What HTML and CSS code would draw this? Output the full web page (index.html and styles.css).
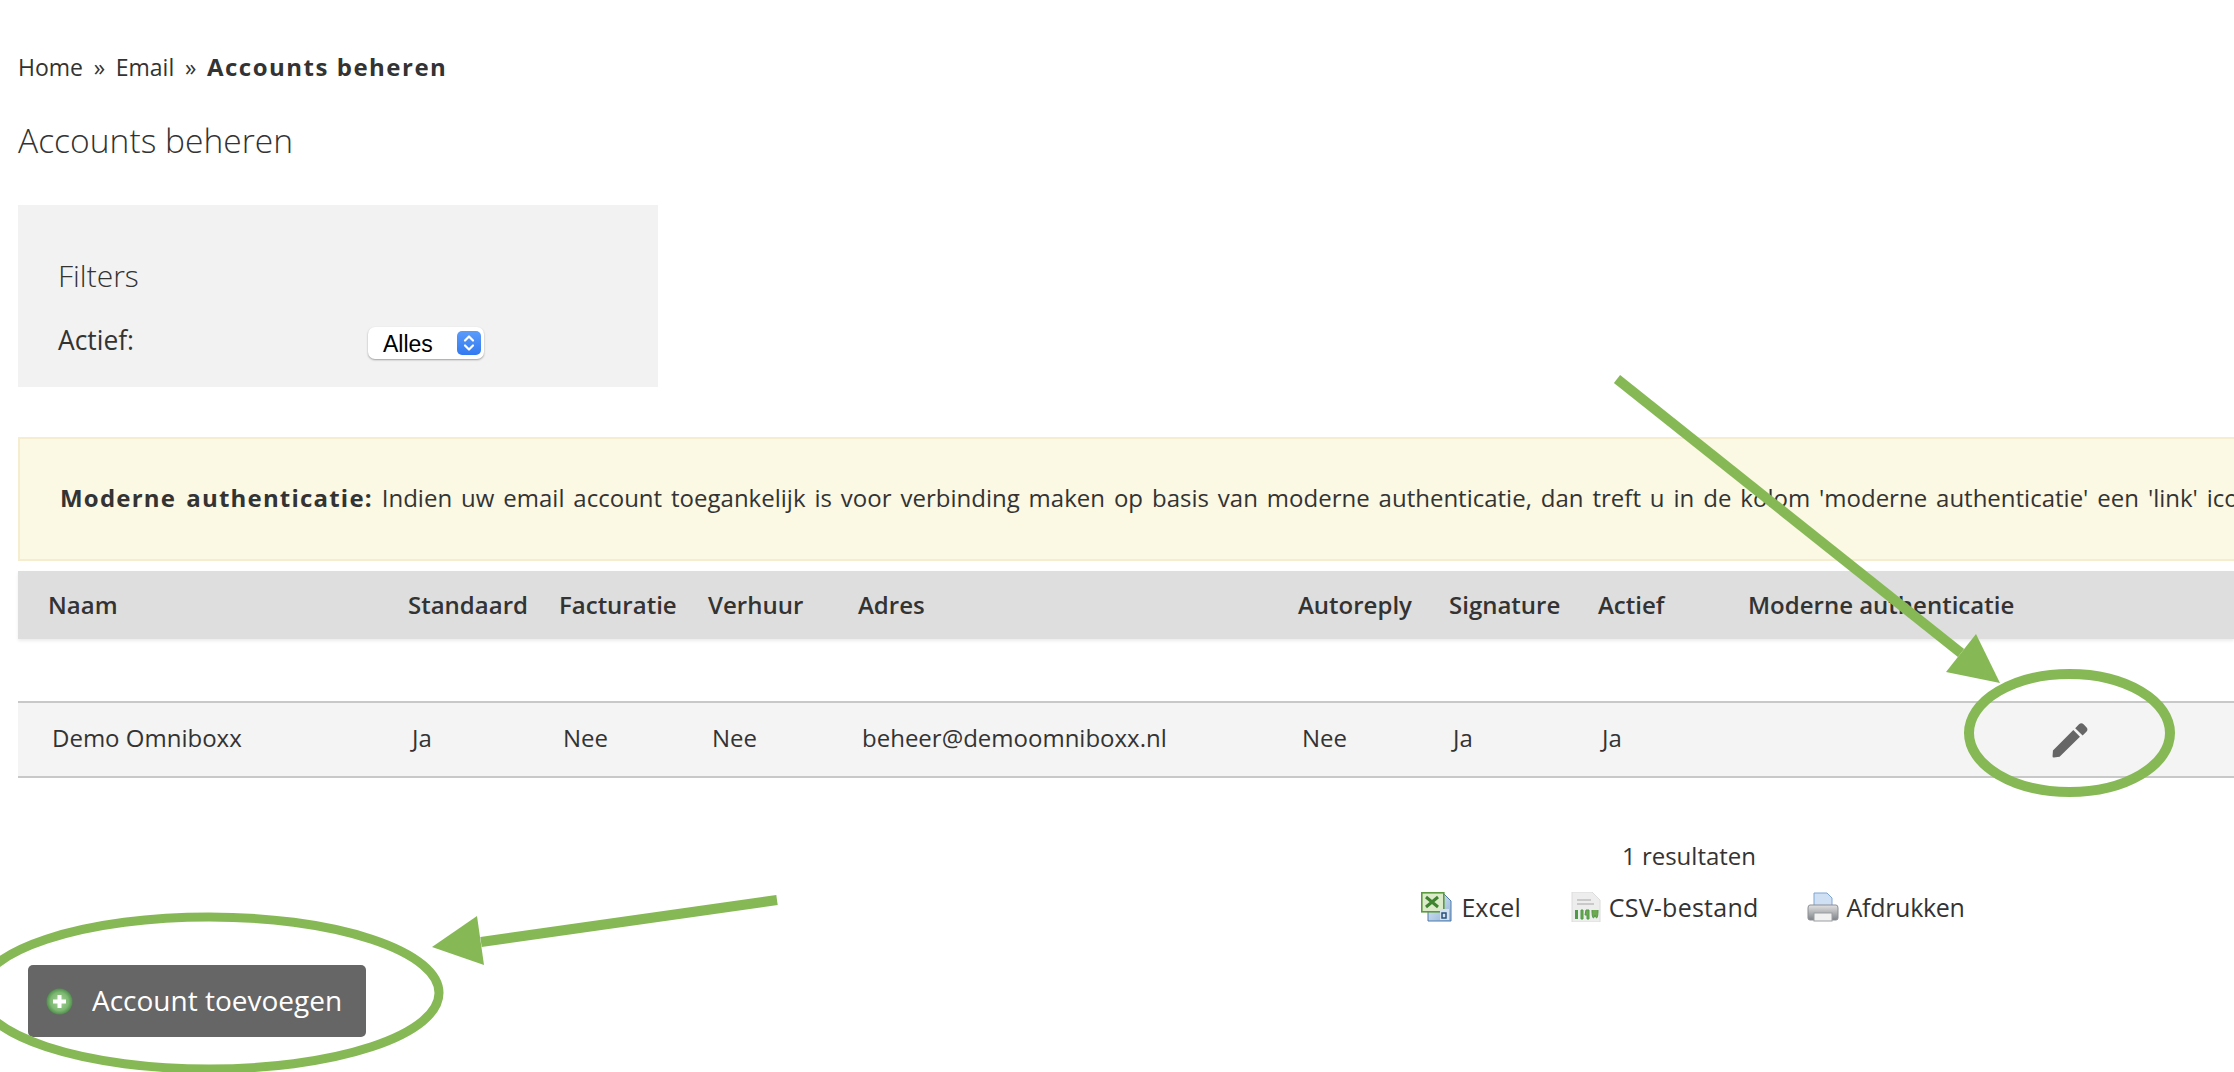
FILE: index.html
```html
<!DOCTYPE html>
<html lang="nl">
<head>
<meta charset="utf-8">
<title>Accounts beheren</title>
<link rel="stylesheet" href="styles.css">
</head>
<body>
<main class="page">
  <nav class="crumbs">Home » Email » <strong class="crumb-current">Accounts beheren</strong></nav>
  <h1 class="title">Accounts beheren</h1>

  <section class="filters">
    <h2 class="filters-title">Filters</h2>
    <div class="filter-row">
      <label class="filter-label">Actief:</label>
      <div class="select">
        <span class="select-value">Alles</span>
        <span class="select-btn">
          <svg width="24" height="24" viewBox="0 0 24 24" fill="none" stroke="#fff" stroke-width="2.2" stroke-linecap="round" stroke-linejoin="round"><path d="M8 9.500l4-4 4 4M8 14.500l4 4 4-4"/></svg>
        </span>
      </div>
    </div>
  </section>

  <p class="notice"><strong class="notice-lead">Moderne authenticatie:</strong> Indien uw email account toegankelijk is voor verbinding maken op basis van moderne authenticatie, dan treft u in de kolom 'moderne authenticatie' een 'link' icoon aan.</p>

  <div class="table-head grid">
    <span>Naam</span><span>Standaard</span><span>Facturatie</span><span>Verhuur</span><span>Adres</span><span>Autoreply</span><span>Signature</span><span>Actief</span><span>Moderne authenticatie</span><span></span>
  </div>
  <div class="table-row grid">
    <span>Demo Omniboxx</span><span>Ja</span><span>Nee</span><span>Nee</span><span>beheer@demoomniboxx.nl</span><span>Nee</span><span>Ja</span><span>Ja</span><span></span>
    <span class="edit">
      <svg width="36" height="37" viewBox="0 0 38 38"><path fill="#666" d="M1 30.500 22.500 9l7 7L8 37.200l-6 .8q-1.600.2-1.400-1.600zM24.500 7l4-4q2.500-2.300 4.800 0l3 3q2.200 2.300 0 4.800l-4 4z"/></svg>
    </span>
  </div>

  <div class="results">
    <div class="results-count">1 resultaten</div>
    <div class="exports">
      <a class="export">
        <svg width="32" height="30" viewBox="0 0 32 30">
          <defs><linearGradient id="xl" x1="0" y1="0" x2="1" y2="1"><stop offset="0" stop-color="#e4eef8"/><stop offset="1" stop-color="#8fb2d8"/></linearGradient></defs>
          <path d="M7 2h16l7 7v20H7z" fill="url(#xl)" stroke="#4f7bab"/>
          <rect x=".8" y=".8" width="22" height="19" fill="#dcebc9" stroke="#5b9a3f" stroke-width="1.600"/>
          <path d="M5 5l12 10M17 5 5 15" stroke="#3f8430" stroke-width="3"/>
          <rect x="19" y="17" width="9" height="11" fill="#d5e1ef"/>
          <path d="M21 21h4v5h-4zM25 21" fill="none" stroke="#28507e" stroke-width="1.500"/>
        </svg>
        <span>Excel</span>
      </a>
      <a class="export export-csv">
        <svg width="30" height="30" viewBox="0 0 30 30">
          <path d="M1 0h20l8 8v22H1z" fill="#ededed" stroke="#dcdcdc"/>
          <path d="M6 8h14M6 12h17" stroke="#bdbdbd" stroke-width="1.500"/>
          <rect x="4" y="18" width="3" height="9" fill="#4f9a46"/>
          <path d="M10 18v9h2v-9zM15 18l-1 5h2v4h2v-9zM21 18c0 10 2 9 3 5 1 4 3 5 3-5" fill="#6ea94f" stroke="#4f9a46"/>
        </svg>
        <span>CSV-bestand</span>
      </a>
      <a class="export export-print">
        <svg width="32" height="30" viewBox="0 0 32 30">
          <defs><linearGradient id="pr" x1="0" y1="0" x2="0" y2="1"><stop offset="0" stop-color="#e2e2e2"/><stop offset="1" stop-color="#7f8388"/></linearGradient></defs>
          <path d="M7 1h13l5 5v9H7z" fill="#cfe0f5" stroke="#7fa5d3"/>
          <path d="M3 13h26q2 0 2 3v10q0 2-2 2H3q-2 0-2-2V16q0-3 2-3z" fill="url(#pr)" stroke="#8b8f94"/>
          <rect x="7" y="21" width="18" height="8" fill="#f1f1f1" stroke="#9a9da1"/>
        </svg>
        <span>Afdrukken</span>
      </a>
    </div>
  </div>

  <a class="add-btn">
    <svg class="add-icon" width="27" height="27" viewBox="0 0 27 27">
      <defs><radialGradient id="ag"><stop offset="0" stop-color="#a9d39b"/><stop offset=".7" stop-color="#7db872"/><stop offset="1" stop-color="#4f8f4c"/></radialGradient></defs>
      <circle cx="13.500" cy="13.500" r="13" fill="url(#ag)"/>
      <path d="M11.500 7h4v4.500H20v4h-4.500V20h-4v-4.500H7v-4h4.500z" fill="#fff"/>
    </svg>
    <span class="add-label">Account toevoegen</span>
  </a>
</main>

<svg class="annotations" width="2234" height="1072" viewBox="0 0 2234 1072" fill="none">
  <path d="M1617 379 1961 653" stroke="#86b955" stroke-width="10"/>
  <path d="M1976 634 2000 683 1946 672z" fill="#86b955"/>
  <ellipse cx="2069.500" cy="733" rx="100.500" ry="59" stroke="#86b955" stroke-width="10"/>
  <path d="M777 900 481 942" stroke="#86b955" stroke-width="10"/>
  <path d="M477 916 432 947 484 965z" fill="#86b955"/>
  <ellipse cx="209" cy="993" rx="230" ry="76" stroke="#86b955" stroke-width="9"/>
</svg>
</body>
</html>
```

FILE: styles.css
```css
* { box-sizing: border-box; }
html, body { margin: 0; height: 100%; overflow: hidden; background: #fff; }
body { position: relative; font-family: "Open Sans", sans-serif; font-size: 24px; color: #333; }
.page { padding: 52px 0 0 18px; width: 2234px; }
.crumbs { height: 30px; line-height: 30px; font-size: 23px; word-spacing: 4.700px; }
.crumb-current { font-size: 24px; font-weight: 700; letter-spacing: 1.500px; word-spacing: 0; }
.title { margin: 36px 0 0; height: 45px; line-height: 45px; font-size: 33.600px; font-weight: 300; }
.filters { margin-top: 42px; width: 640px; height: 182px; padding: 52px 40px 0; background: #f2f2f2; }
.filters-title { margin: 0; height: 38px; line-height: 38px; font-size: 30px; font-weight: 300; }
.filter-row { display: flex; margin-top: 26px; }
.filter-label { width: 310px; height: 38px; line-height: 38px; font-size: 26.400px; }
.select { display: flex; align-items: center; justify-content: space-between; width: 116px; height: 32px; margin-top: 6px; padding: 0 3px 0 15px; background: #fff; border-radius: 7px; box-shadow: 0 1px 2px rgba(0,0,0,.35); font-family: "Liberation Sans", sans-serif; font-size: 23px; color: #000; }
.select-value { padding-top: 2px; }
.select-btn { display: flex; width: 24px; height: 24px; background: linear-gradient(#5b9bfb, #327af0); border-radius: 5px; }
.notice { margin: 50px -20px 0 0; height: 124px; line-height: 118px; white-space: nowrap; overflow: hidden; padding-left: 40px; background: #fbf8e4; border: 2px solid #f6edd0; word-spacing: 2.700px; }
.notice-lead { font-weight: 700; letter-spacing: 1.200px; }
.grid { display: grid; grid-template-columns: 360px 151px 149px 150px 440px 151px 149px 150px 300px 1fr; }
.table-head { margin-top: 10px; height: 68px; padding: 0 0 2px 30px; align-items: center; background: #dedede; font-weight: 600; box-shadow: 0 2px 3px rgba(0,0,0,.08); }
.table-row { margin-top: 62px; height: 77px; padding-left: 34px; align-items: center; background: #f4f4f4; border-top: 2px solid #c8c8c8; border-bottom: 2px solid #c8c8c8; }
.table-row > span:not(.edit) { padding-bottom: 4px; }
.edit { display: flex; }
.results { margin: 0 0 0 1134px; padding-top: 63px; text-align: center; }
.results-count { height: 30px; line-height: 30px; padding-right: 8px; }
.exports { display: flex; justify-content: center; margin-top: 21px; font-size: 25px; }
.export { display: flex; align-items: center; gap: 8px; height: 30px; }
.export-csv { margin-left: 50px; letter-spacing: .250px; }
.export-print { margin-left: 48px; letter-spacing: -.300px; }
.add-btn { display: flex; align-items: center; gap: 19px; width: 338px; height: 72px; margin: 43px 0 0 10px; padding-left: 18px; background: #666; border-radius: 5px; color: #fff; font-size: 28px; }
.add-icon { flex: none; }
.add-label { padding-bottom: 2px; }
.annotations { position: absolute; left: 0; top: 0; pointer-events: none; }
```
